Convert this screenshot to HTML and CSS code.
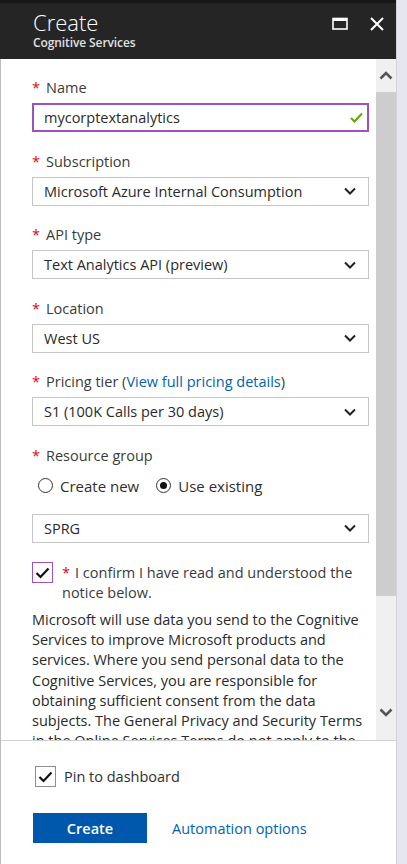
FILE: index.html
```html
<!DOCTYPE html>
<html>
<head>
<meta charset="utf-8">
<link rel="stylesheet" href="styles.css">
</head>
<body>
<div class="panel">
  <header class="header">
    <div class="titles">
      <div class="title">Create</div>
      <div class="subtitle">Cognitive Services</div>
    </div>
    <div class="hicons">
      <svg class="hicon" width="16" height="13" viewBox="0 0 16 13"><rect x="1" y="1.5" width="14" height="10.5" fill="none" stroke="#fff" stroke-width="1.6"/><rect x="1" y="1" width="14" height="3" fill="#fff"/></svg>
      <svg class="hicon" width="14" height="14" viewBox="0 0 14 14"><path d="M1 1L13 13M13 1L1 13" stroke="#fff" stroke-width="2" fill="none"/></svg>
    </div>
  </header>
  <div class="body">
    <div class="form">
      <div class="field">
        <div class="label"><span class="req">*</span>Name</div>
        <div class="input valid">mycorptextanalytics
          <svg class="check" width="13" height="11" viewBox="0 0 13 11"><path d="M1 6L4.5 9.5L12 1.5" fill="none" stroke="#5ea800" stroke-width="2"/></svg>
        </div>
      </div>
      <div class="field">
        <div class="label"><span class="req">*</span>Subscription</div>
        <div class="input select">Microsoft Azure Internal Consumption<svg class="chev" width="12" height="8" viewBox="0 0 12 8"><path d="M1 1.5L6 6.5L11 1.5" fill="none" stroke="#222" stroke-width="2"/></svg></div>
      </div>
      <div class="field">
        <div class="label"><span class="req">*</span>API type</div>
        <div class="input select">Text Analytics API (preview)<svg class="chev" width="12" height="8" viewBox="0 0 12 8"><path d="M1 1.5L6 6.5L11 1.5" fill="none" stroke="#222" stroke-width="2"/></svg></div>
      </div>
      <div class="field">
        <div class="label"><span class="req">*</span>Location</div>
        <div class="input select">West US<svg class="chev" width="12" height="8" viewBox="0 0 12 8"><path d="M1 1.5L6 6.5L11 1.5" fill="none" stroke="#222" stroke-width="2"/></svg></div>
      </div>
      <div class="field">
        <div class="label"><span class="req">*</span>Pricing tier (<a class="link">View full pricing details</a>)</div>
        <div class="input select">S1 (100K Calls per 30 days)<svg class="chev" width="12" height="8" viewBox="0 0 12 8"><path d="M1 1.5L6 6.5L11 1.5" fill="none" stroke="#222" stroke-width="2"/></svg></div>
      </div>
      <div class="field">
        <div class="label"><span class="req">*</span>Resource group</div>
        <div class="radios">
          <span class="radio"><span class="circle"></span>Create new</span>
          <span class="radio"><span class="circle on"></span>Use existing</span>
        </div>
        <div class="input select">SPRG<svg class="chev" width="12" height="8" viewBox="0 0 12 8"><path d="M1 1.5L6 6.5L11 1.5" fill="none" stroke="#222" stroke-width="2"/></svg></div>
      </div>
      <div class="confirm">
        <span class="cbox purple"><svg width="15" height="12" viewBox="0 0 15 12"><path d="M1.5 6L5.5 10L13.5 1.5" fill="none" stroke="#111" stroke-width="2.2"/></svg></span>
        <span class="ctext"><span class="req">*</span>I confirm I have read and understood the notice below.</span>
      </div>
      <p class="notice">Microsoft will use data you send to the Cognitive Services to improve Microsoft products and services. Where you send personal data to the Cognitive Services, you are responsible for obtaining sufficient consent from the data subjects. The General Privacy and Security Terms in the Online Services Terms do not apply to the Cognitive Services.</p>
    </div>
    <div class="scrollbar">
      <div class="sbtn"><svg width="14" height="9" viewBox="0 0 14 9"><path d="M1.5 7.5L7 2L12.5 7.5" fill="none" stroke="#555" stroke-width="2.6"/></svg></div>
      <div class="thumb"></div>
      <div class="track"></div>
      <div class="sbtn down"><svg width="14" height="9" viewBox="0 0 14 9"><path d="M1.5 1.5L7 7L12.5 1.5" fill="none" stroke="#555" stroke-width="2.6"/></svg></div>
    </div>
  </div>
  <footer class="footer">
    <div class="pin">
      <span class="cbox grey"><svg width="15" height="12" viewBox="0 0 15 12"><path d="M1.5 6L5.5 10L13.5 1.5" fill="none" stroke="#111" stroke-width="2.2"/></svg></span>
      <span>Pin to dashboard</span>
    </div>
    <div class="actions">
      <button class="btn">Create</button>
      <a class="link auto">Automation options</a>
    </div>
  </footer>
</div>
</body>
</html>
```
FILE: styles.css
```css
* { box-sizing: border-box; }
html, body { margin: 0; padding: 0; }
body {
  background: #e6e6ee;
  font-family: "Open Sans", "Noto Sans", sans-serif;
  color: #3b3b3b;
  width: 407px;
  height: 864px;
  overflow: hidden;
}
.panel {
  width: 397px;
  height: 864px;
  background: #fff;
  border-left: 1px solid #bdbdbd;
  border-right: 1px solid #d4d4d8;
  display: flex;
  flex-direction: column;
}
.header {
  height: 59px;
  flex: none;
  background: #252525;
  border-top: 3px solid #161616;
  margin-left: -1px;
  display: flex;
  justify-content: space-between;
  padding: 5px 12px 0 33px;
}
.title {
  color: #fff;
  font-size: 22px;
  font-weight: 300;
  line-height: 28px;
}
.subtitle {
  color: #e0e0e0;
  font-size: 12px;
  font-weight: 600;
  line-height: 14px;
  letter-spacing: -0.1px;
}
.hicons {
  display: flex;
  gap: 22px;
  padding-top: 9px;
}
.hicon { display: block; }
.body {
  flex: 1;
  display: flex;
  min-height: 0;
  overflow: hidden;
}
.form {
  flex: 1;
  padding: 19px 7px 0 31px;
  overflow: hidden;
}
.field { margin-bottom: 19.5px; }
.label {
  font-size: 14.5px;
  line-height: 20px;
  height: 20px;
  margin-bottom: 5px;
  color: #3b3b3b;
  white-space: nowrap;
}
.req {
  color: #e3001b;
  margin-right: 6px;
}
.link { color: #0063b1; text-decoration: none; }
.input {
  height: 29px;
  border: 1px solid #c6c6c6;
  font-size: 14.5px;
  line-height: 27px;
  padding: 0 11px;
  color: #2a2a2a;
  display: flex;
  justify-content: space-between;
  align-items: center;
  white-space: nowrap;
}
.input.valid {
  border: 2px solid #9b52c2;
  padding: 0 4px 0 10px;
}
.check { flex: none; }
.chev { flex: none; margin-right: 1px; }
.radios {
  display: flex;
  gap: 17px;
  padding: 5px 0 0 6px;
  height: 43px;
  font-size: 15px;
  line-height: 20px;
  color: #2f2f2f;
}
.radio { display: flex; align-items: center; gap: 7px; height: 20px; }
.circle {
  width: 15px;
  height: 15px;
  border: 1.3px solid #333;
  border-radius: 50%;
  display: flex;
  align-items: center;
  justify-content: center;
}
.circle.on::after {
  content: "";
  width: 7px;
  height: 7px;
  border-radius: 50%;
  background: #111;
}
.confirm {
  display: flex;
  gap: 9px;
  font-size: 14.5px;
  line-height: 20px;
}
.cbox {
  flex: none;
  width: 21px;
  height: 21px;
  border: 1.5px solid #8e8e8e;
  display: flex;
  align-items: center;
  justify-content: center;
}
.cbox.purple { border-color: #9b52c2; }
.ctext { padding-top: 1px; }
.ctext .req { margin-right: 5px; }
.notice {
  margin: 7px 0 0 0;
  font-size: 14.5px;
  line-height: 20.2px;
  color: #2a2a2a;
}
.scrollbar {
  width: 20px;
  flex: none;
  background: #f0f0f0;
  display: flex;
  flex-direction: column;
}
.sbtn {
  height: 33px;
  flex: none;
  display: flex;
  align-items: center;
  justify-content: center;
}
.sbtn.down { height: 50px; align-items: flex-start; padding-top: 18px; }
.thumb {
  height: 504px;
  flex: none;
  background: #cdcdcd;
}
.track { flex: 1; }
.footer {
  height: 124px;
  flex: none;
  border-top: 1px solid #d0d0d0;
  padding: 25px 0 0 34px;
}
.pin {
  display: flex;
  align-items: center;
  gap: 8px;
  font-size: 14.5px;
  color: #2f2f2f;
}
.actions {
  display: flex;
  align-items: center;
  gap: 25px;
  margin-top: 26px;
  margin-left: -2px;
}
.btn {
  width: 114px;
  height: 30px;
  background: #0058ad;
  border: none;
  color: #fff;
  font-family: inherit;
  font-size: 14.5px;
  font-weight: 600;
  padding: 0;
}
.auto { font-size: 14.5px; }
```
